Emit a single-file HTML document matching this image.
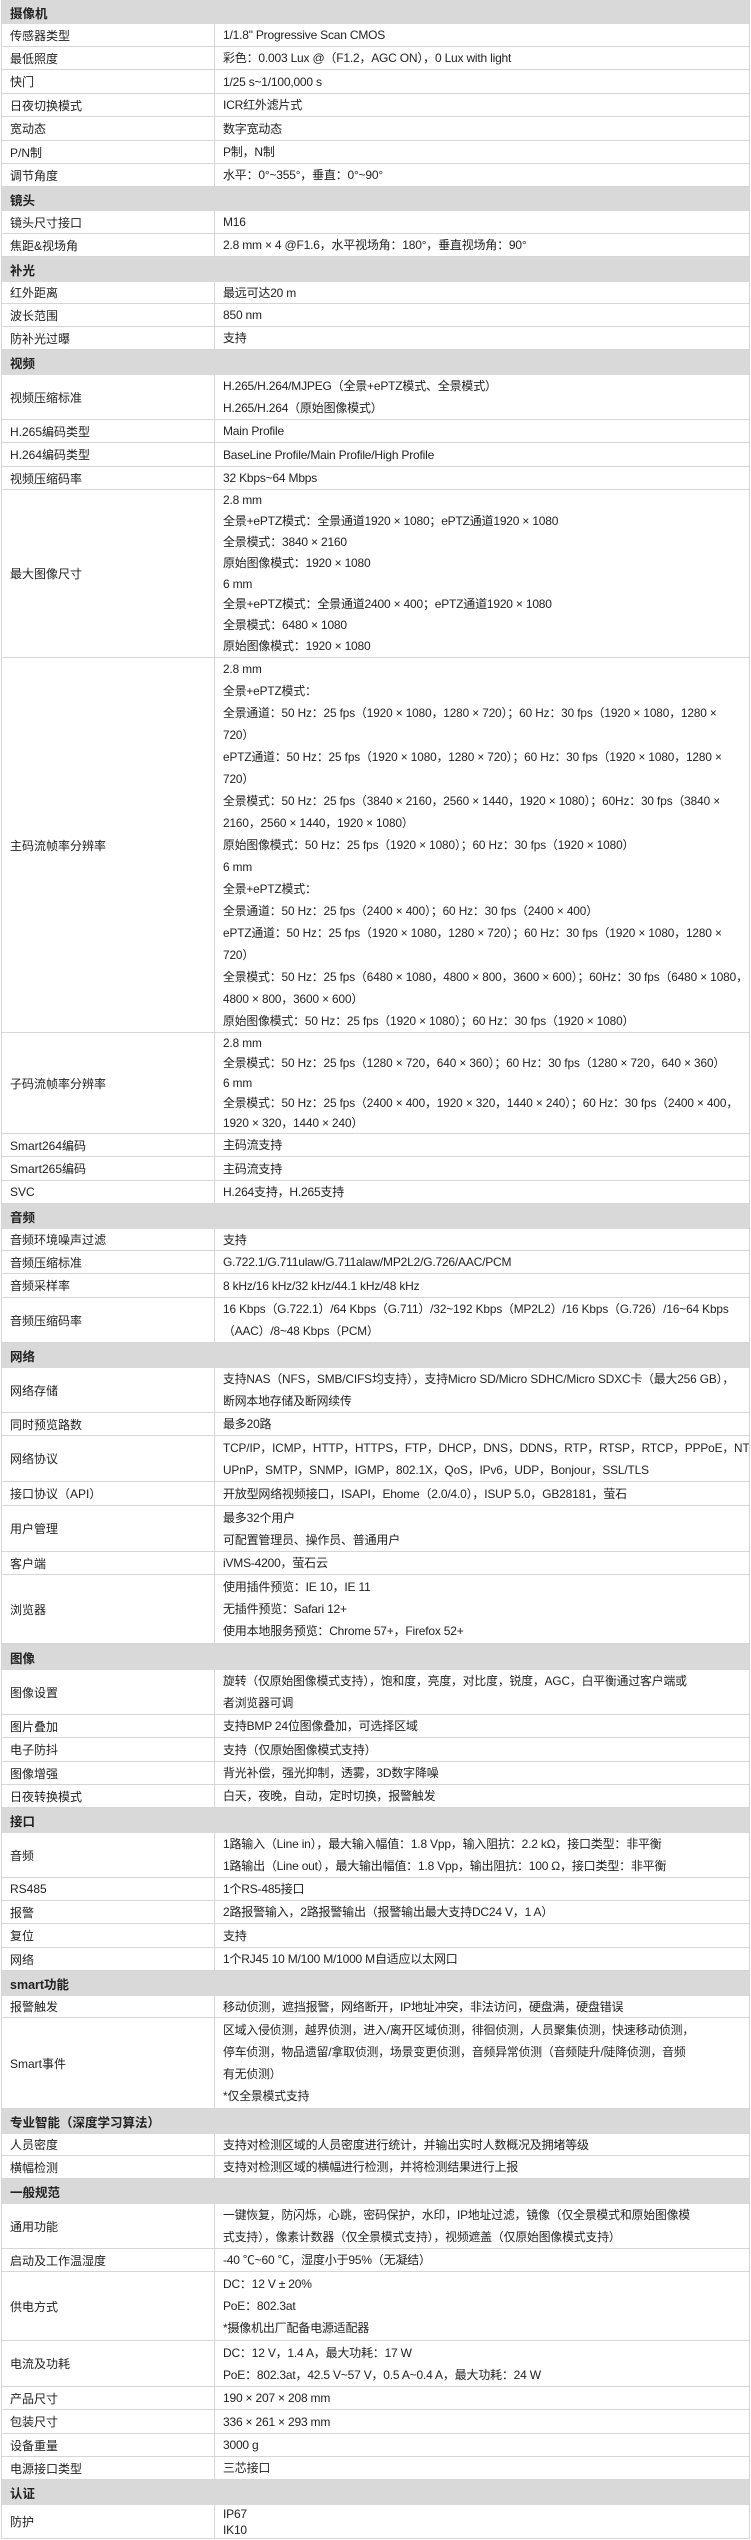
<!DOCTYPE html>
<html><head><meta charset="utf-8"><style>
*{margin:0;padding:0;box-sizing:border-box}
body{width:751px;height:2540px;background:#fff;font-family:"Liberation Sans","Noto Sans CJK SC",sans-serif;font-size:12px;color:#222;overflow:hidden}
.t{position:absolute;left:1px;top:0;width:749px;border-left:1px solid #d6d6d6;border-right:1px solid #d6d6d6}
.r{display:flex;border-bottom:1px solid #d6d6d6;overflow:hidden}
.h{background:#d9d9d9;font-weight:bold;font-size:12.5px;align-items:center;padding-left:8px;border-bottom:none}
.l{width:213px;border-right:1px solid #d6d6d6;display:flex;align-items:center;padding-left:8px;white-space:nowrap}
.v{flex:1;display:flex;flex-direction:column;justify-content:center;padding-left:8px;white-space:nowrap;line-height:22px;overflow:hidden;letter-spacing:-0.2px}
.s{font-size:11.8px;letter-spacing:-0.1px}
</style></head><body>
<div class="t">
<div class="r h" style="height:24px">摄像机</div>
<div class="r" style="height:23px"><div class="l">传感器类型</div><div class="v">1/1.8" Progressive Scan CMOS</div></div>
<div class="r" style="height:23px"><div class="l">最低照度</div><div class="v">彩色：0.003 Lux @（F1.2，AGC ON），0 Lux with light</div></div>
<div class="r" style="height:24px"><div class="l">快门</div><div class="v">1/25 s~1/100,000 s</div></div>
<div class="r" style="height:23px"><div class="l">日夜切换模式</div><div class="v">ICR红外滤片式</div></div>
<div class="r" style="height:24px"><div class="l">宽动态</div><div class="v">数字宽动态</div></div>
<div class="r" style="height:23px"><div class="l">P/N制</div><div class="v">P制，N制</div></div>
<div class="r" style="height:23px"><div class="l">调节角度</div><div class="v">水平：0°~355°，垂直：0°~90°</div></div>
<div class="r h" style="height:24px">镜头</div>
<div class="r" style="height:23px"><div class="l">镜头尺寸接口</div><div class="v">M16</div></div>
<div class="r" style="height:23px"><div class="l">焦距&amp;视场角</div><div class="v">2.8 mm × 4 @F1.6，水平视场角：180°，垂直视场角：90°</div></div>
<div class="r h" style="height:25px">补光</div>
<div class="r" style="height:22px"><div class="l">红外距离</div><div class="v">最远可达20 m</div></div>
<div class="r" style="height:23px"><div class="l">波长范围</div><div class="v">850 nm</div></div>
<div class="r" style="height:23px"><div class="l">防补光过曝</div><div class="v">支持</div></div>
<div class="r h" style="height:25px">视频</div>
<div class="r" style="height:45px"><div class="l">视频压缩标准</div><div class="v"><div>H.265/H.264/MJPEG（全景+ePTZ模式、全景模式）</div><div>H.265/H.264（原始图像模式）</div></div></div>
<div class="r" style="height:23px"><div class="l">H.265编码类型</div><div class="v">Main Profile</div></div>
<div class="r" style="height:24px"><div class="l">H.264编码类型</div><div class="v">BaseLine Profile/Main Profile/High Profile</div></div>
<div class="r" style="height:23px"><div class="l">视频压缩码率</div><div class="v">32 Kbps~64 Mbps</div></div>
<div class="r" style="height:168px"><div class="l">最大图像尺寸</div><div class="v" style="line-height:20.8px"><div>2.8 mm</div><div>全景+ePTZ模式：全景通道1920 × 1080；ePTZ通道1920 × 1080</div><div>全景模式：3840 × 2160</div><div>原始图像模式：1920 × 1080</div><div>6 mm</div><div>全景+ePTZ模式：全景通道2400 × 400；ePTZ通道1920 × 1080</div><div>全景模式：6480 × 1080</div><div>原始图像模式：1920 × 1080</div></div></div>
<div class="r" style="height:375px"><div class="l">主码流帧率分辨率</div><div class="v s"><div>2.8 mm</div><div>全景+ePTZ模式：</div><div>全景通道：50 Hz：25 fps（1920 × 1080，1280 × 720）；60 Hz：30 fps（1920 × 1080，1280 ×</div><div>720）</div><div>ePTZ通道：50 Hz：25 fps（1920 × 1080，1280 × 720）；60 Hz：30 fps（1920 × 1080，1280 ×</div><div>720）</div><div>全景模式：50 Hz：25 fps（3840 × 2160，2560 × 1440，1920 × 1080）；60Hz：30 fps（3840 ×</div><div>2160，2560 × 1440，1920 × 1080）</div><div>原始图像模式：50 Hz：25 fps（1920 × 1080）；60 Hz：30 fps（1920 × 1080）</div><div>6 mm</div><div>全景+ePTZ模式：</div><div>全景通道：50 Hz：25 fps（2400 × 400）；60 Hz：30 fps（2400 × 400）</div><div>ePTZ通道：50 Hz：25 fps（1920 × 1080，1280 × 720）；60 Hz：30 fps（1920 × 1080，1280 ×</div><div>720）</div><div>全景模式：50 Hz：25 fps（6480 × 1080，4800 × 800，3600 × 600）；60Hz：30 fps（6480 × 1080，</div><div>4800 × 800，3600 × 600）</div><div>原始图像模式：50 Hz：25 fps（1920 × 1080）；60 Hz：30 fps（1920 × 1080）</div></div></div>
<div class="r" style="height:101px"><div class="l">子码流帧率分辨率</div><div class="v s" style="line-height:20px"><div>2.8 mm</div><div>全景模式：50 Hz：25 fps（1280 × 720，640 × 360）；60 Hz：30 fps（1280 × 720，640 × 360）</div><div>6 mm</div><div>全景模式：50 Hz：25 fps（2400 × 400，1920 × 320，1440 × 240）；60 Hz：30 fps（2400 × 400，</div><div>1920 × 320，1440 × 240）</div></div></div>
<div class="r" style="height:23px"><div class="l">Smart264编码</div><div class="v">主码流支持</div></div>
<div class="r" style="height:24px"><div class="l">Smart265编码</div><div class="v">主码流支持</div></div>
<div class="r" style="height:23px"><div class="l">SVC</div><div class="v">H.264支持，H.265支持</div></div>
<div class="r h" style="height:25px">音频</div>
<div class="r" style="height:22px"><div class="l">音频环境噪声过滤</div><div class="v">支持</div></div>
<div class="r" style="height:23px"><div class="l">音频压缩标准</div><div class="v">G.722.1/G.711ulaw/G.711alaw/MP2L2/G.726/AAC/PCM</div></div>
<div class="r" style="height:24px"><div class="l">音频采样率</div><div class="v">8 kHz/16 kHz/32 kHz/44.1 kHz/48 kHz</div></div>
<div class="r" style="height:45px"><div class="l">音频压缩码率</div><div class="v s"><div>16 Kbps（G.722.1）/64 Kbps（G.711）/32~192 Kbps（MP2L2）/16 Kbps（G.726）/16~64 Kbps</div><div>（AAC）/8~48 Kbps（PCM）</div></div></div>
<div class="r h" style="height:25px">网络</div>
<div class="r" style="height:45px"><div class="l">网络存储</div><div class="v s"><div>支持NAS（NFS，SMB/CIFS均支持），支持Micro SD/Micro SDHC/Micro SDXC卡（最大256 GB），</div><div>断网本地存储及断网续传</div></div></div>
<div class="r" style="height:23px"><div class="l">同时预览路数</div><div class="v">最多20路</div></div>
<div class="r" style="height:46px"><div class="l">网络协议</div><div class="v s"><div>TCP/IP，ICMP，HTTP，HTTPS，FTP，DHCP，DNS，DDNS，RTP，RTSP，RTCP，PPPoE，NTP，</div><div>UPnP，SMTP，SNMP，IGMP，802.1X，QoS，IPv6，UDP，Bonjour，SSL/TLS</div></div></div>
<div class="r" style="height:24px"><div class="l">接口协议（API）</div><div class="v">开放型网络视频接口，ISAPI，Ehome（2.0/4.0），ISUP 5.0，GB28181，萤石</div></div>
<div class="r" style="height:46px"><div class="l">用户管理</div><div class="v"><div>最多32个用户</div><div>可配置管理员、操作员、普通用户</div></div></div>
<div class="r" style="height:23px"><div class="l">客户端</div><div class="v">iVMS-4200，萤石云</div></div>
<div class="r" style="height:70px;border-bottom:2px solid #d6d6d6"><div class="l">浏览器</div><div class="v"><div>使用插件预览：IE 10，IE 11</div><div>无插件预览：Safari 12+</div><div>使用本地服务预览：Chrome 57+，Firefox 52+</div></div></div>
<div class="r h" style="height:25px">图像</div>
<div class="r" style="height:45px"><div class="l">图像设置</div><div class="v s"><div>旋转（仅原始图像模式支持），饱和度，亮度，对比度，锐度，AGC，白平衡通过客户端或</div><div>者浏览器可调</div></div></div>
<div class="r" style="height:23px"><div class="l">图片叠加</div><div class="v">支持BMP 24位图像叠加，可选择区域</div></div>
<div class="r" style="height:24px"><div class="l">电子防抖</div><div class="v">支持（仅原始图像模式支持）</div></div>
<div class="r" style="height:23px"><div class="l">图像增强</div><div class="v">背光补偿，强光抑制，透雾，3D数字降噪</div></div>
<div class="r" style="height:23px"><div class="l">日夜转换模式</div><div class="v">白天，夜晚，自动，定时切换，报警触发</div></div>
<div class="r h" style="height:25px">接口</div>
<div class="r" style="height:45px"><div class="l">音频</div><div class="v"><div>1路输入（Line in），最大输入幅值：1.8 Vpp，输入阻抗：2.2 kΩ，接口类型：非平衡</div><div>1路输出（Line out），最大输出幅值：1.8 Vpp，输出阻抗：100 Ω，接口类型：非平衡</div></div></div>
<div class="r" style="height:23px"><div class="l">RS485</div><div class="v">1个RS-485接口</div></div>
<div class="r" style="height:23px"><div class="l">报警</div><div class="v">2路报警输入，2路报警输出（报警输出最大支持DC24 V，1 A）</div></div>
<div class="r" style="height:24px"><div class="l">复位</div><div class="v">支持</div></div>
<div class="r" style="height:23px"><div class="l">网络</div><div class="v">1个RJ45 10 M/100 M/1000 M自适应以太网口</div></div>
<div class="r h" style="height:25px">smart功能</div>
<div class="r" style="height:22px"><div class="l">报警触发</div><div class="v">移动侦测，遮挡报警，网络断开，IP地址冲突，非法访问，硬盘满，硬盘错误</div></div>
<div class="r" style="height:91px"><div class="l">Smart事件</div><div class="v s"><div>区域入侵侦测，越界侦测，进入/离开区域侦测，徘徊侦测，人员聚集侦测，快速移动侦测，</div><div>停车侦测，物品遗留/拿取侦测，场景变更侦测，音频异常侦测（音频陡升/陡降侦测，音频</div><div>有无侦测）</div><div>*仅全景模式支持</div></div></div>
<div class="r h" style="height:25px">专业智能（深度学习算法）</div>
<div class="r" style="height:22px"><div class="l">人员密度</div><div class="v">支持对检测区域的人员密度进行统计，并输出实时人数概况及拥堵等级</div></div>
<div class="r" style="height:23px"><div class="l">横幅检测</div><div class="v">支持对检测区域的横幅进行检测，并将检测结果进行上报</div></div>
<div class="r h" style="height:25px">一般规范</div>
<div class="r" style="height:45px"><div class="l">通用功能</div><div class="v s"><div>一键恢复，防闪烁，心跳，密码保护，水印，IP地址过滤，镜像（仅全景模式和原始图像模</div><div>式支持），像素计数器（仅全景模式支持），视频遮盖（仅原始图像模式支持）</div></div></div>
<div class="r" style="height:23px"><div class="l">启动及工作温湿度</div><div class="v">-40 ℃~60 ℃，湿度小于95%（无凝结）</div></div>
<div class="r" style="height:69px"><div class="l">供电方式</div><div class="v"><div>DC：12 V ± 20%</div><div>PoE：802.3at</div><div>*摄像机出厂配备电源适配器</div></div></div>
<div class="r" style="height:46px"><div class="l">电流及功耗</div><div class="v"><div>DC：12 V，1.4 A，最大功耗：17 W</div><div>PoE：802.3at，42.5 V~57 V，0.5 A~0.4 A，最大功耗：24 W</div></div></div>
<div class="r" style="height:23px"><div class="l">产品尺寸</div><div class="v">190 × 207 × 208 mm</div></div>
<div class="r" style="height:24px"><div class="l">包装尺寸</div><div class="v">336 × 261 × 293 mm</div></div>
<div class="r" style="height:23px"><div class="l">设备重量</div><div class="v">3000 g</div></div>
<div class="r" style="height:23px"><div class="l">电源接口类型</div><div class="v">三芯接口</div></div>
<div class="r h" style="height:25px">认证</div>
<div class="r" style="height:34px"><div class="l">防护</div><div class="v" style="line-height:16px"><div>IP67</div><div>IK10</div></div></div>
</div>
</body></html>
